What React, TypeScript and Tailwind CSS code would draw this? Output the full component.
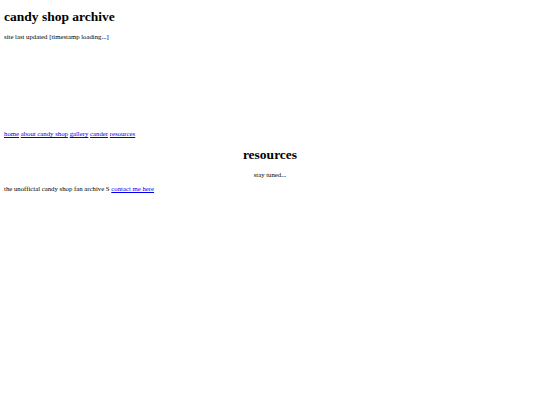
import React from 'react';

const links = ['home', 'about candy shop', 'gallery', 'cander', 'resources'];

export default function App() {
  return (
    <div className="min-h-[405px] bg-white px-[4px] text-black text-[6.75px] leading-[9px]" style={{ fontFamily: '"Liberation Serif", "Times New Roman", serif' }}>
      <div className="flex flex-col">
        <h1 className="mt-[8px] text-[13.5px] leading-[18px] font-bold">candy shop archive</h1>
        <p className="mt-[6px]">site last updated [timestamp loading...]</p>

        {/* empty banner area */}
        <div className="h-[88px]" />

        <nav>
          {links.map((l, i) => (
            <React.Fragment key={l}>
              {i > 0 && ' '}
              <a href="#" className="text-[#0000ee] underline">{l}</a>
            </React.Fragment>
          ))}
        </nav>

        <h2 className="mt-[9px] text-center text-[13.5px] leading-[15px] font-bold">resources</h2>
        <p className="mt-[8px] text-center">stay tuned...</p>

        <footer className="mt-[5px]">
          the unofficial candy shop fan archive S{' '}
          <a href="#" className="text-[#0000ee] underline">contact me here</a>
        </footer>
      </div>
    </div>
  );
}
